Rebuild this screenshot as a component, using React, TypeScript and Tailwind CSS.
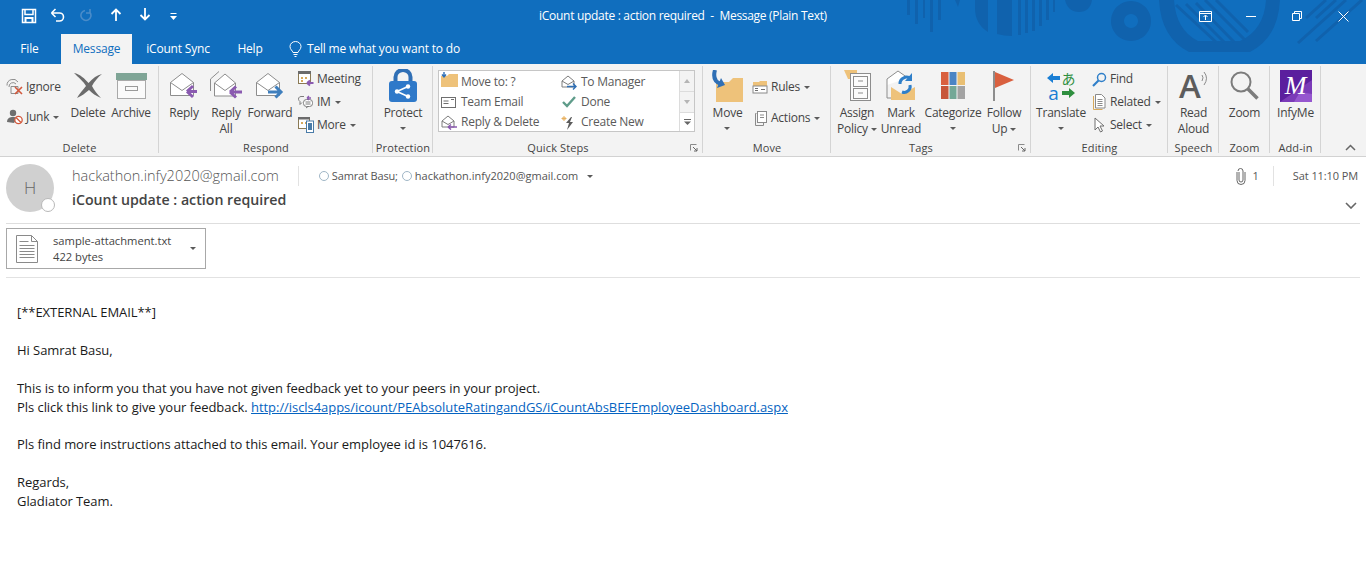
import type { ReactNode } from "react";

function Caret({ className = "" }: { className?: string }) {
  return (
    <svg width="6" height="3" viewBox="0 0 6 3" className={`inline-block shrink-0 ${className}`}>
      <path d="M0 0h6L3 3z" fill="#5a5a5a" />
    </svg>
  );
}

function BigButton({
  width,
  icon,
  lines,
  caretBelow,
  className = "",
}: {
  width: string;
  icon: ReactNode;
  lines: ReactNode[];
  caretBelow?: boolean;
  className?: string;
}) {
  return (
    <div className={`flex shrink-0 flex-col items-center ${width} ${className}`}>
      <div className="flex h-[37px] shrink-0 items-center justify-center">{icon}</div>
      <div className="mt-[1px] flex flex-col items-center leading-[16px] whitespace-nowrap">
        {lines.map((line, i) => (
          <span key={i} className="flex items-center gap-[3px]">
            {line}
          </span>
        ))}
        {caretBelow && <Caret className="mt-[6px]" />}
      </div>
    </div>
  );
}

function SmallRow({ icon, label, caret, className = "" }: { icon: ReactNode; label: string; caret?: boolean; className?: string }) {
  return (
    <div className={`flex items-center gap-[2px] whitespace-nowrap ${className}`}>
      <span className="flex h-[18px] w-[18px] shrink-0 items-center justify-center">{icon}</span>
      <span>{label}</span>
      {caret && <Caret className="ml-[2px]" />}
    </div>
  );
}

function Group({ width, label, launcher, children }: { width: string; label: string; launcher?: boolean; children: ReactNode }) {
  return (
    <div className={`relative flex shrink-0 flex-col ${width}`}>
      <div className="flex h-[75px] pt-[3px]">{children}</div>
      <div className={`flex h-[17px] items-center justify-center pt-[2px] text-[11px] tracking-[0.01em] whitespace-nowrap ${launcher ? "pr-[20px]" : ""}`}>
        {label}
      </div>
      <div className="absolute top-[2px] right-0 bottom-[3px] w-px bg-[#d4d4d4]" />
      {launcher && (
        <svg width="8" height="8" viewBox="0 0 8 8" className="absolute right-[5px] bottom-[4px]">
          <path d="M0.5 0.5h6M0.5 0.5v6" stroke="#8a8a8a" fill="none" />
          <path d="M3 3l4 4M7 4v3H4" stroke="#666" fill="none" />
        </svg>
      )}
    </div>
  );
}

const Envelope = ({ arrow }: { arrow: "reply" | "forward" }) => (
  <svg width="32" height="32" viewBox="0 0 32 32">
    <path d="M2.500 12.500L14 3.500l11.500 9v13h-23z" fill="#fff" stroke="#8d8d8d" />
    <path d="M2.500 12.500l11.500 8 11.500-8" fill="none" stroke="#8d8d8d" />
    {arrow === "reply" ? (
      <path d="M30 21.500H20M20 21.500l6-5.500M20 21.500l6 5.500" stroke="#8a5ab0" strokeWidth="3" fill="none" transform="translate(-1 0)" />
    ) : (
      <path d="M14 22h13M21.500 16.500l5.500 5.500-5.500 5.500" stroke="#3f7fbd" strokeWidth="3" fill="none" />
    )}
  </svg>
);

function TitlePattern() {
  return (
    <svg width="486" height="52" viewBox="880 0 486 52" className="absolute top-0 right-0">
      <g fill="#1062ad">
        <rect x="907" y="0" width="3" height="15" />
        <rect x="915" y="0" width="3" height="24" />
        <rect x="923" y="0" width="2" height="18" />
        <rect x="930" y="0" width="3" height="32" />
        <rect x="938" y="0" width="3" height="20" />
        <path d="M955 0h5l-2 7zM975 0h13v32q-13-8-13-24z" />
        <path d="M997 0h15v36q-8 0-15-2z" />
        <rect x="1018" y="0" width="3" height="35" />
        <rect x="1025" y="0" width="3" height="33" />
        <rect x="1032" y="0" width="3" height="31" />
        <rect x="1039" y="0" width="3" height="26" />
        <rect x="1046" y="0" width="3" height="20" />
        <rect x="1053" y="0" width="2" height="12" />
        <path d="M1065 0h27q-2 12-13 12t-14-12z" />
        <path fillRule="evenodd" d="M1131 1a20 20 0 1 1-.01 0zM1131 14a7 7 0 1 0 .01 0z" />
        <path fillRule="evenodd" d="M1159 0h121q-2 38-30 52h-61q-28-14-30-52zM1174 0q2 30 24 41h42q24-11 26-41z" />
      </g>
      <g stroke="#1062ad" strokeWidth="3" fill="none">
        <path d="M1176 5l40 37M1186 4l38 38M1196 3l38 39M1205 0l40 40M1216 0l32 32" />
        <path d="M1298 43l48-43M1316 41l46-41M1306 18l20-18M1316 18l20-18" />
      </g>
    </svg>
  );
}

export default function App() {
  return (
    <div className="relative h-[565px] w-[1366px] overflow-hidden bg-white font-['Open_Sans',sans-serif] text-[#444]">
      {/* title bar */}
      <div className="relative h-[64px] bg-[#106ebe] text-white">
        <TitlePattern />
        <div className="relative grid h-[32px] grid-cols-[1fr_auto_1fr] items-center">
          <div className="flex pl-[14px]">
            <span className="flex w-[29px] justify-center">
              <svg width="16" height="16" viewBox="0 0 16 16" fill="none" stroke="#fff" strokeWidth="1.500">
                <path d="M1.500 1.500h13v13h-13z" />
                <path d="M4 2v4.500h8V2" />
                <path d="M4.500 14.500V10h7v4.500" strokeWidth="2" />
              </svg>
            </span>
            <span className="flex w-[29px] justify-center">
              <svg width="15" height="15" viewBox="0 0 15 15" fill="none" stroke="#fff" strokeWidth="1.600">
                <path d="M1.500 5h8a4 4 0 0 1 0 8H6M1.500 5l4-4M1.500 5l4 4" />
              </svg>
            </span>
            <span className="flex w-[29px] justify-center">
              <svg width="14" height="14" viewBox="0 0 14 14" fill="none" stroke="#4a8cc9" strokeWidth="1.600">
                <path d="M10 1v4h-4M10 4.500a5 5 0 1 1-5-2" />
              </svg>
            </span>
            <span className="flex w-[29px] justify-center">
              <svg width="12" height="13" viewBox="0 0 12 13" fill="none" stroke="#fff" strokeWidth="1.800">
                <path d="M6 13V2M1.500 6L6 1.500 10.500 6" />
              </svg>
            </span>
            <span className="flex w-[29px] justify-center">
              <svg width="12" height="13" viewBox="0 0 12 13" fill="none" stroke="#fff" strokeWidth="1.800">
                <path d="M6 0v11M1.500 7L6 11.500 10.500 7" />
              </svg>
            </span>
            <span className="flex w-[29px] items-center justify-center">
              <svg width="7" height="7" viewBox="0 0 7 7" fill="#fff">
                <rect x="0.500" y="0" width="6" height="1" />
                <path d="M0 3h7L3.500 7z" />
              </svg>
            </span>
          </div>
          <div className="text-[12px] tracking-[-0.025em] whitespace-pre">iCount update : action required  -  Message (Plain Text)</div>
          <div className="flex justify-end">
            <span className="flex w-[46px] justify-center">
              <svg width="13" height="11" viewBox="0 0 13 11" fill="none" stroke="#fff">
                <path d="M0.500 0.500h12v10h-12zM0.500 2.500h12M6.500 9V4.500M4.500 6l2-2 2 2" />
              </svg>
            </span>
            <span className="flex w-[46px] items-center justify-center">
              <svg width="10" height="1" viewBox="0 0 10 1">
                <rect width="10" height="1" fill="#fff" />
              </svg>
            </span>
            <span className="flex w-[46px] justify-center">
              <svg width="10" height="10" viewBox="0 0 10 10" fill="none" stroke="#fff">
                <path d="M0.500 2.500h7v7h-7zM2.500 2.500v-2h7v7h-2" />
              </svg>
            </span>
            <span className="flex w-[46px] justify-center">
              <svg width="11" height="11" viewBox="0 0 11 11" fill="none" stroke="#fff">
                <path d="M0.500 0.500l10 10M10.500 0.500l-10 10" />
              </svg>
            </span>
          </div>
        </div>
        <div className="relative flex h-[32px] items-end text-[12px] tracking-[-0.015em]">
          <div className="flex h-[30px] w-[59px] items-center justify-center">File</div>
          <div className="ml-[2px] flex h-[30px] w-[71px] items-center justify-center bg-[#f3f3f3] text-[#106ebe]">Message</div>
          <div className="flex h-[30px] w-[92px] items-center justify-center">iCount Sync</div>
          <div className="flex h-[30px] w-[52px] items-center justify-center">Help</div>
          <div className="flex h-[30px] items-center gap-[4px] pl-[12px]">
            <svg width="15" height="16" viewBox="0 0 15 16" fill="none" stroke="#fff">
              <path d="M5 11.500C4.500 9.500 2 8.500 2 5.500a5.500 5 0 0 1 11 0c0 3-2.500 4-3 6zM5.500 13.500h4M6.500 15.500h2" />
            </svg>
            <span>Tell me what you want to do</span>
          </div>
        </div>
      </div>

      {/* ribbon */}
      <div className="flex h-[93px] border-b border-[#d2d2d2] bg-[#f3f3f3] text-[12px] tracking-[-0.02em] text-[#444]">
        <Group width="w-[159px]" label="Delete">
          <div className="flex w-[66px] shrink-0 flex-col gap-[12px] pl-[6px] pt-[11px]">
            <SmallRow
              label="Ignore"
              icon={
                <svg width="18" height="16" viewBox="0 0 18 16" fill="none">
                  <path d="M1 6.500A6 6 0 0 1 12 3M3 8a4 4 0 0 1 7-3" stroke="#8d8d8d" />
                  <path d="M5 7.500h7v7H5z" stroke="#8d8d8d" />
                  <path d="M9 8l7 7M16 8l-7 7" stroke="#d2583c" strokeWidth="1.600" />
                </svg>
              }
            />
            <SmallRow
              label="Junk"
              caret
              icon={
                <svg width="18" height="16" viewBox="0 0 18 16">
                  <circle cx="7" cy="4" r="3.200" fill="#6f6f6f" />
                  <path d="M1 13c0-4 3-5 6-5 2 0 3 .5 4 1.500L8 14z" fill="#6f6f6f" />
                  <circle cx="12.500" cy="11" r="3.700" fill="#fff" stroke="#d2583c" strokeWidth="1.300" />
                  <path d="M10 8.500l5 5" stroke="#d2583c" strokeWidth="1.300" />
                </svg>
              }
            />
          </div>
          <BigButton
            width="w-[44px]"
            lines={["Delete"]}
            icon={
              <svg width="30" height="28" viewBox="0 0 30 28">
                <path d="M1 1c6 1 11 6 14.500 10C20 6 24 3 29 2c-4 3-8 8-10 12 2 4 5 8 9 12-5-2-9-5-12-8-4 3-7 6-12 8 2-4 6-8 9-12C11 10 5 5 1 1z" fill="#6b6b6b" />
              </svg>
            }
          />
          <BigButton
            width="w-[42px]"
            lines={["Archive"]}
            icon={
              <svg width="31" height="26" viewBox="0 0 31 26">
                <rect x="1.500" y="7.500" width="28" height="18" fill="#fafafa" stroke="#a9a9a9" />
                <rect x="0" y="0" width="31" height="7" fill="#7fa596" />
                <rect x="9.500" y="13.500" width="12" height="4" fill="none" stroke="#9a9a9a" />
              </svg>
            }
          />
        </Group>
        <Group width="w-[214px]" label="Respond">
          <div className="flex pl-[4px]">
            <BigButton width="w-[42px]" lines={["Reply"]} icon={<Envelope arrow="reply" />} />
            <BigButton
              width="w-[42px]"
              lines={["Reply", "All"]}
              icon={
                <svg width="34" height="32" viewBox="0 0 34 32">
                  <path d="M1.500 21V9L10 1.500" fill="none" stroke="#8d8d8d" />
                  <path d="M5.500 13L16 4l10.500 9v13h-21z" fill="#fff" stroke="#8d8d8d" />
                  <path d="M5.500 13L16 20.500 26.500 13" fill="none" stroke="#8d8d8d" />
                  <path d="M33 22H21M21 22l6-5.500M21 22l6 5.500" stroke="#8a5ab0" strokeWidth="3" fill="none" />
                </svg>
              }
            />
            <BigButton width="w-[46px]" lines={["Forward"]} icon={<Envelope arrow="forward" />} />
            <div className="flex flex-col gap-[5px] pl-[4px] pt-[3px]">
              <SmallRow
                label="Meeting"
                icon={
                  <svg width="16" height="16" viewBox="0 0 16 16">
                    <rect x="0.500" y="1.500" width="12" height="11" fill="#fff" stroke="#8a7a55" />
                    <rect x="0" y="0" width="13" height="3" fill="#6b6b6b" />
                    <path d="M3 6h2v2H3zM7 6h2v2H7zM3 9h2v2H3z" fill="#d6a95c" />
                    <path d="M15.500 12H9M9 12l3-2.500M9 12l3 2.500" stroke="#8a5ab0" strokeWidth="1.800" fill="none" />
                  </svg>
                }
              />
              <SmallRow
                label="IM"
                caret
                icon={
                  <svg width="16" height="16" viewBox="0 0 16 16" fill="none" stroke="#7c7c7c">
                    <path d="M6 2.500H3a2.500 2.500 0 0 0-2 4l1 1v3l2-2" />
                    <rect x="5.500" y="5.500" width="9" height="7" rx="3" fill="#fff" />
                    <path d="M7.500 8h5M7.500 10h5M8 14l2-1.500" />
                    <path d="M13 4H9M9 4l2-2M9 4l2 2" stroke="#8a5ab0" strokeWidth="1.300" />
                  </svg>
                }
              />
              <SmallRow
                label="More"
                caret
                icon={
                  <svg width="16" height="16" viewBox="0 0 16 16">
                    <rect x="0.500" y="1.500" width="11" height="10" fill="#fff" stroke="#8a7a55" />
                    <rect x="0" y="0" width="12" height="2.500" fill="#6b6b6b" />
                    <path d="M3 5h2v2H3zM7 5h2v2H7z" fill="#d6a95c" />
                    <rect x="8.500" y="4" width="7" height="11.500" fill="#fff" stroke="#4a7ba8" />
                    <rect x="10" y="6" width="4" height="7" fill="#4a7ba8" />
                  </svg>
                }
              />
            </div>
          </div>
        </Group>
        <Group width="w-[60px]" label="Protection">
          <BigButton
            width="w-full"
            lines={["Protect"]}
            caretBelow
            icon={
              <svg width="28" height="33" viewBox="0 0 28 33">
                <path d="M6.500 13V8a7.500 7 0 0 1 15 0v5" fill="none" stroke="#2f6fb5" strokeWidth="4" />
                <rect x="0" y="12" width="28" height="21" rx="3" fill="#2f79c9" />
                <circle cx="8" cy="22.500" r="2.200" fill="#fff" />
                <circle cx="19" cy="17.500" r="2.200" fill="#fff" />
                <circle cx="19" cy="27.500" r="2.200" fill="#fff" />
                <path d="M8 22.500l11-5M8 22.500l11 5" stroke="#fff" strokeWidth="1.500" />
              </svg>
            }
          />
        </Group>
        <Group width="w-[270px]" label="Quick Steps" launcher>
          <div className="mt-[3px] ml-[5px] flex h-[62px] w-[257px] border border-[#c6c6c6] bg-white">
            <div className="grid flex-1 grid-cols-[120px_1fr] grid-rows-[20px_20px_20px] items-center pt-[1px] pl-[2px] text-[#5a5a5a]">
              <div className="flex items-center gap-[3px]">
                <svg width="17" height="15" viewBox="0 0 17 15" className="-mt-[5px]">
                  <path d="M0 4h6l2 -2h9v13H0z" fill="#eec27a" />
                  <path d="M3 0v4M1 2.500L3 5l2-2.500" stroke="#2f6fb5" strokeWidth="1.400" fill="none" />
                </svg>
                <span>Move to: ?</span>
              </div>
              <div className="flex items-center gap-[4px]">
                <svg width="16" height="15" viewBox="0 0 16 15" fill="none">
                  <path d="M1 6l6-5 6 5v6H1z" stroke="#7c7c7c" />
                  <path d="M1 6l6 3.500L13 6" stroke="#7c7c7c" />
                  <path d="M6 11.500h9M12 8.500l3 3-3 3" stroke="#2f6fb5" strokeWidth="1.400" />
                </svg>
                <span>To Manager</span>
              </div>
              <div className="flex items-center gap-[5px]">
                <svg width="15" height="11" viewBox="0 0 15 11" fill="none" stroke="#6f6f6f">
                  <rect x="0.500" y="0.500" width="14" height="10" />
                  <path d="M2.500 4h5M2.500 6.500h5M10 2.500h3" />
                </svg>
                <span>Team Email</span>
              </div>
              <div className="flex items-center gap-[5px]">
                <svg width="14" height="12" viewBox="0 0 14 12" fill="none" stroke="#5f9c8a" strokeWidth="2.400" className="ml-[1px]">
                  <path d="M1 6l4 4 8-9" />
                </svg>
                <span>Done</span>
              </div>
              <div className="flex items-center gap-[3px]">
                <svg width="17" height="15" viewBox="0 0 17 15" fill="none">
                  <path d="M1 6l6-5 6 5v6H1z" stroke="#7c7c7c" />
                  <path d="M1 6l6 3.500L13 6" stroke="#7c7c7c" />
                  <path d="M16 12H7M7 12l3-2.500M7 12l3 2.500" stroke="#8a5ab0" strokeWidth="1.500" />
                </svg>
                <span>Reply &amp; Delete</span>
              </div>
              <div className="flex items-center gap-[6px]">
                <svg width="14" height="15" viewBox="0 0 14 15">
                  <path d="M10 2L5 8h3l-2 7 6-8H9l2-5z" fill="#5b5b5b" />
                  <path d="M3 1v5M0.500 3.500h5M1.500 2l3 3M4.500 2l-3 3" stroke="#e8b160" />
                </svg>
                <span>Create New</span>
              </div>
            </div>
            <div className="flex w-[15px] flex-col border-l border-[#dcdcdc] bg-[#f3f3f3]">
              <div className="flex h-[21px] items-center justify-center border-b border-[#dcdcdc]">
                <svg width="6" height="4" viewBox="0 0 6 4"><path d="M3 0l3 4H0z" fill="#b5b5b5" /></svg>
              </div>
              <div className="flex h-[21px] items-center justify-center border-b border-[#dcdcdc]">
                <svg width="6" height="4" viewBox="0 0 6 4"><path d="M0 0h6L3 4z" fill="#b5b5b5" /></svg>
              </div>
              <div className="flex flex-1 items-center justify-center bg-white">
                <svg width="7" height="6" viewBox="0 0 7 6" fill="#666">
                  <rect width="7" height="1" />
                  <path d="M0 2.500h7L3.500 6z" />
                </svg>
              </div>
            </div>
          </div>
        </Group>
        <Group width="w-[128px]" label="Move">
          <BigButton
            width="w-[47px]"
            className="ml-[1px]"
            lines={["Move"]}
            caretBelow
            icon={
              <svg width="31" height="32" viewBox="0 0 31 32">
                <path d="M4 12h13l4-4h10v24H4z" fill="#eec27a" />
                <path d="M3 0c-2 7 0 12 6 14" stroke="#2f6fb5" strokeWidth="4" fill="none" />
                <path d="M5 18l8-3-4-7z" fill="#2f6fb5" />
              </svg>
            }
          />
          <div className="flex flex-col gap-[13px] pt-[11px]">
            <SmallRow
              label="Rules"
              caret
              icon={
                <svg width="16" height="14" viewBox="0 0 16 14">
                  <path d="M1 2h6l1-1h7v5H1z" fill="#eec27a" />
                  <rect x="1" y="6" width="14" height="7" fill="#fff" stroke="#8a8a8a" />
                  <path d="M3 8.500h3M3 10.500h3M9 9.500h4" stroke="#6f6f6f" />
                </svg>
              }
            />
            <SmallRow
              label="Actions"
              caret
              icon={
                <svg width="16" height="15" viewBox="0 0 16 15" fill="none" stroke="#8a8a8a">
                  <path d="M4.500 2.500h-1v12h8v-3" />
                  <rect x="5.500" y="0.500" width="9" height="11" fill="#fff" />
                  <path d="M8 4h4M8 6.500h4" />
                </svg>
              }
            />
          </div>
        </Group>
        <Group width="w-[200px]" label="Tags" launcher>
          <div className="flex pl-[4px]">
            <BigButton
              width="w-[44px]"
              lines={["Assign", <>Policy <Caret /></>]}
              icon={
                <svg width="27" height="31" viewBox="0 0 27 31">
                  <path d="M0 0h13v9H4z" fill="#eec27a" />
                  <rect x="6.500" y="3.500" width="20" height="27" fill="#fbfbfb" stroke="#8d8d8d" />
                  <rect x="9.500" y="6.500" width="14" height="10" fill="none" stroke="#8d8d8d" />
                  <rect x="9.500" y="18.500" width="14" height="10" fill="none" stroke="#8d8d8d" />
                  <path d="M14 11h5M14 23h5" stroke="#8d8d8d" />
                </svg>
              }
            />
            <BigButton
              width="w-[44px]"
              lines={["Mark", "Unread"]}
              icon={
                <svg width="30" height="32" viewBox="0 0 30 32">
                  <path d="M1 15V9L12 1l10 7" fill="#fff" stroke="#8d8d8d" />
                  <path d="M1 15v13h8" fill="none" stroke="#8d8d8d" />
                  <path d="M5 17l11 7 13-7v13H5z" fill="#eec27a" />
                  <path d="M14 14a6.500 6.500 0 0 1 11-5" stroke="#2f7fc9" strokeWidth="3" fill="none" />
                  <path d="M16 22a6 6 0 0 0 8-7" stroke="#2f7fc9" strokeWidth="3" fill="none" />
                  <path d="M26 3v8h-7z" fill="#2f7fc9" />
                </svg>
              }
            />
            <BigButton
              width="w-[60px]"
              lines={["Categorize"]}
              caretBelow
              icon={
                <svg width="24" height="27" viewBox="0 0 24 27">
                  <rect x="0" y="0" width="7.500" height="13" fill="#d9603f" />
                  <rect x="8.500" y="0" width="7" height="13" fill="#4a84c4" />
                  <rect x="16.500" y="0" width="7.500" height="13" fill="#e9bf73" />
                  <rect x="0" y="14" width="7.500" height="13" fill="#c7563a" />
                  <rect x="8.500" y="14" width="7" height="13" fill="#74a897" />
                  <rect x="16.500" y="14" width="7.500" height="13" fill="#a3a3a3" />
                </svg>
              }
            />
            <BigButton
              width="w-[42px]"
              lines={["Follow", <>Up <Caret /></>]}
              icon={
                <svg width="22" height="30" viewBox="0 0 22 30">
                  <rect x="0" y="0" width="2" height="30" fill="#8d8d8d" />
                  <path d="M2 1l19 8-19 8z" fill="#d9603f" />
                </svg>
              }
            />
          </div>
        </Group>
        <Group width="w-[137px]" label="Editing">
          <div className="flex pl-[6px]">
            <BigButton
              width="w-[48px]"
              lines={["Translate"]}
              caretBelow
              icon={
                <div className="grid w-[30px] grid-cols-2 grid-rows-[15px_15px] items-center justify-items-center">
                  <svg width="13" height="10" viewBox="0 0 13 10">
                    <path d="M0 5l6-5v3h7v4H6v3z" fill="#1a7ed4" />
                  </svg>
                  <span className="font-['Noto_Sans_CJK_JP',sans-serif] text-[14px] leading-[15px] tracking-normal text-[#2f8f3f]">あ</span>
                  <span className="text-[19px] leading-[15px] tracking-normal text-[#1a7ed4]">a</span>
                  <svg width="13" height="10" viewBox="0 0 13 10">
                    <path d="M13 5L7 0v3H0v4h7v3z" fill="#2f8f3f" />
                  </svg>
                </div>
              }
            />
            <div className="flex flex-col gap-[5px] pl-[5px] pt-[3px]">
              <SmallRow
                label="Find"
                icon={
                  <svg width="15" height="15" viewBox="0 0 15 15" fill="none" stroke="#2f7fc9" strokeWidth="1.500">
                    <circle cx="9.500" cy="5.500" r="4" />
                    <path d="M6.500 8.500L1 14" strokeWidth="2.200" />
                  </svg>
                }
              />
              <SmallRow
                label="Related"
                caret
                icon={
                  <svg width="14" height="16" viewBox="0 0 14 16" fill="none" stroke="#8a8a8a">
                    <path d="M1.500 2v13.500h9" stroke="#d6a95c" />
                    <path d="M3.500 0.500h6l3.500 3.500v10h-9.500z" fill="#fff" />
                    <path d="M5.500 5.500h5M5.500 7.500h5M5.500 9.500h5M5.500 11.500h5" />
                  </svg>
                }
              />
              <SmallRow
                label="Select"
                caret
                icon={
                  <svg width="11" height="16" viewBox="0 0 11 16">
                    <path d="M1 1v12l3-3 2.500 5 2-1-2.500-5h4z" fill="#fff" stroke="#6f6f6f" />
                  </svg>
                }
              />
            </div>
          </div>
        </Group>
        <Group width="w-[51px]" label="Speech">
          <BigButton
            width="w-full"
            lines={["Read", "Aloud"]}
            icon={
              <div className="flex items-start text-[#5c5c5c]">
                <span className="text-[33px] leading-[30px] font-semibold tracking-normal">A</span>
                <svg width="7" height="16" viewBox="0 0 7 16" fill="none" stroke="#8a8a8a">
                  <path d="M1 4q2 2.500 0 6M3 1q5 6 0 13" />
                </svg>
              </div>
            }
          />
        </Group>
        <Group width="w-[51px]" label="Zoom">
          <BigButton
            width="w-full"
            lines={["Zoom"]}
            icon={
              <svg width="29" height="29" viewBox="0 0 29 29" fill="none" stroke="#7c7c7c">
                <circle cx="11" cy="11" r="9.500" strokeWidth="2" />
                <path d="M18 18l9.500 9.500" strokeWidth="3.500" />
              </svg>
            }
          />
        </Group>
        <Group width="w-[51px]" label="Add-in">
          <BigButton
            width="w-full"
            lines={["InfyMe"]}
            icon={
              <div className="relative flex h-[32px] w-[32px] items-center justify-center bg-[#5b1f9e] text-white">
                <svg width="32" height="32" viewBox="0 0 32 32" className="absolute inset-0">
                  <path d="M0 32L32 10v22z" fill="#7b3bb8" />
                  <path d="M14 32l6-10 12 2v8z" fill="#9657cf" />
                </svg>
                <span className="relative font-['Liberation_Serif',serif] text-[26px] leading-[30px] italic">M</span>
              </div>
            }
          />
        </Group>
        <div className="flex flex-1 items-end justify-end pr-[10px] pb-[5px]">
          <svg width="11" height="7" viewBox="0 0 11 7" fill="none" stroke="#666" strokeWidth="1.500">
            <path d="M1 6l4.500-4.500L10 6" />
          </svg>
        </div>
      </div>

      {/* message header */}
      <div className="mx-[6px] flex h-[67px] w-[1354px] border-b border-[#dedede] pt-[7px]">
        <div className="relative h-[48px] w-[48px] shrink-0 rounded-full bg-[#d0d0d0]">
          <div className="flex h-full items-center justify-center text-[17px] font-light text-[#666]">H</div>
          <div className="absolute right-[-1px] bottom-0 h-[14px] w-[14px] rounded-full border border-[#b8b8b8] bg-white" />
        </div>
        <div className="ml-[18px] flex flex-1 flex-col">
          <div className="flex h-[24px] items-center">
            <span className="text-[14.500px] font-light text-[#555]">hackathon.infy2020@gmail.com</span>
            <span className="mr-[20px] ml-[19px] h-[20px] w-px bg-[#e2e2e2]" />
            <span className="flex items-center gap-[3px] text-[11px] text-[#555]">
              <span className="h-[10px] w-[10px] rounded-full border border-[#9fb6c6]" />
              <span className="tracking-[-0.15px]">Samrat Basu;</span>
              <span className="ml-[1px] h-[10px] w-[10px] rounded-full border border-[#9fb6c6]" />
              <span>hackathon.infy2020@gmail.com</span>
              <Caret className="ml-[6px]" />
            </span>
            <span className="ml-auto flex items-center text-[11px] text-[#555]">
              <svg width="10" height="17" viewBox="0 0 10 17" fill="none" stroke="#666">
                <path d="M3 4v8a2 2 0 0 0 4 0V3a2.500 2.500 0 0 0-5 0" />
                <path d="M1 4v8.500a4 4 0 0 0 8 0V4" />
              </svg>
              <span className="ml-[7px]">1</span>
              <span className="mr-[19px] ml-[14px] h-[20px] w-px bg-[#e2e2e2]" />
              <span className="mr-[2px] tracking-[-0.1px]">Sat 11:10 PM</span>
            </span>
          </div>
          <div className="mt-[1px] flex items-center justify-between">
            <span className="text-[14.200px] font-semibold text-[#444]">iCount update : action required</span>
            <svg width="12" height="7" viewBox="0 0 12 7" fill="none" stroke="#666" strokeWidth="1.600" className="mt-[12px] mr-[3px]">
              <path d="M1 1l5 5 5-5" />
            </svg>
          </div>
        </div>
      </div>

      {/* attachment */}
      <div className="mx-[6px] h-[54px] w-[1354px] border-b border-[#e2e2e2] pt-[4px]">
        <div className="flex h-[41px] w-[200px] items-center border border-[#a8a8a8] pl-[9px]">
          <svg width="22" height="28" viewBox="0 0 22 28" fill="none" stroke="#8a8a8a">
            <path d="M0.500 0.500h15l6 6v21h-21z" />
            <path d="M15.500 0.500v6h6" />
            <path d="M3.500 6.500h9M3.500 10.500h15M3.500 13.500h15M3.500 16.500h15M3.500 19.500h15M3.500 22.500h15" />
          </svg>
          <div className="ml-[15px] text-[11.200px] leading-[16px] text-[#444]">
            <div>sample-attachment.txt</div>
            <div>422 bytes</div>
          </div>
          <Caret className="mr-[9px] ml-auto" />
        </div>
      </div>

      {/* body */}
      <div className="px-[17px] pt-[25px] text-[13px] leading-[18.900px] tracking-[-0.055px] text-[#1a1a1a]">
        <p>[**EXTERNAL EMAIL**]</p>
        <p className="mt-[18.900px]">Hi Samrat Basu,</p>
        <p className="mt-[18.900px]">This is to inform you that you have not given feedback yet to your peers in your project.</p>
        <p>
          Pls click this link to give your feedback.{" "}
          <a className="text-[#0563c1] underline">http://iscls4apps/icount/PEAbsoluteRatingandGS/iCountAbsBEFEmployeeDashboard.aspx</a>
        </p>
        <p className="mt-[18.900px]">Pls find more instructions attached to this email. Your employee id is 1047616.</p>
        <p className="mt-[18.900px]">Regards,</p>
        <p>Gladiator Team.</p>
      </div>
    </div>
  );
}
